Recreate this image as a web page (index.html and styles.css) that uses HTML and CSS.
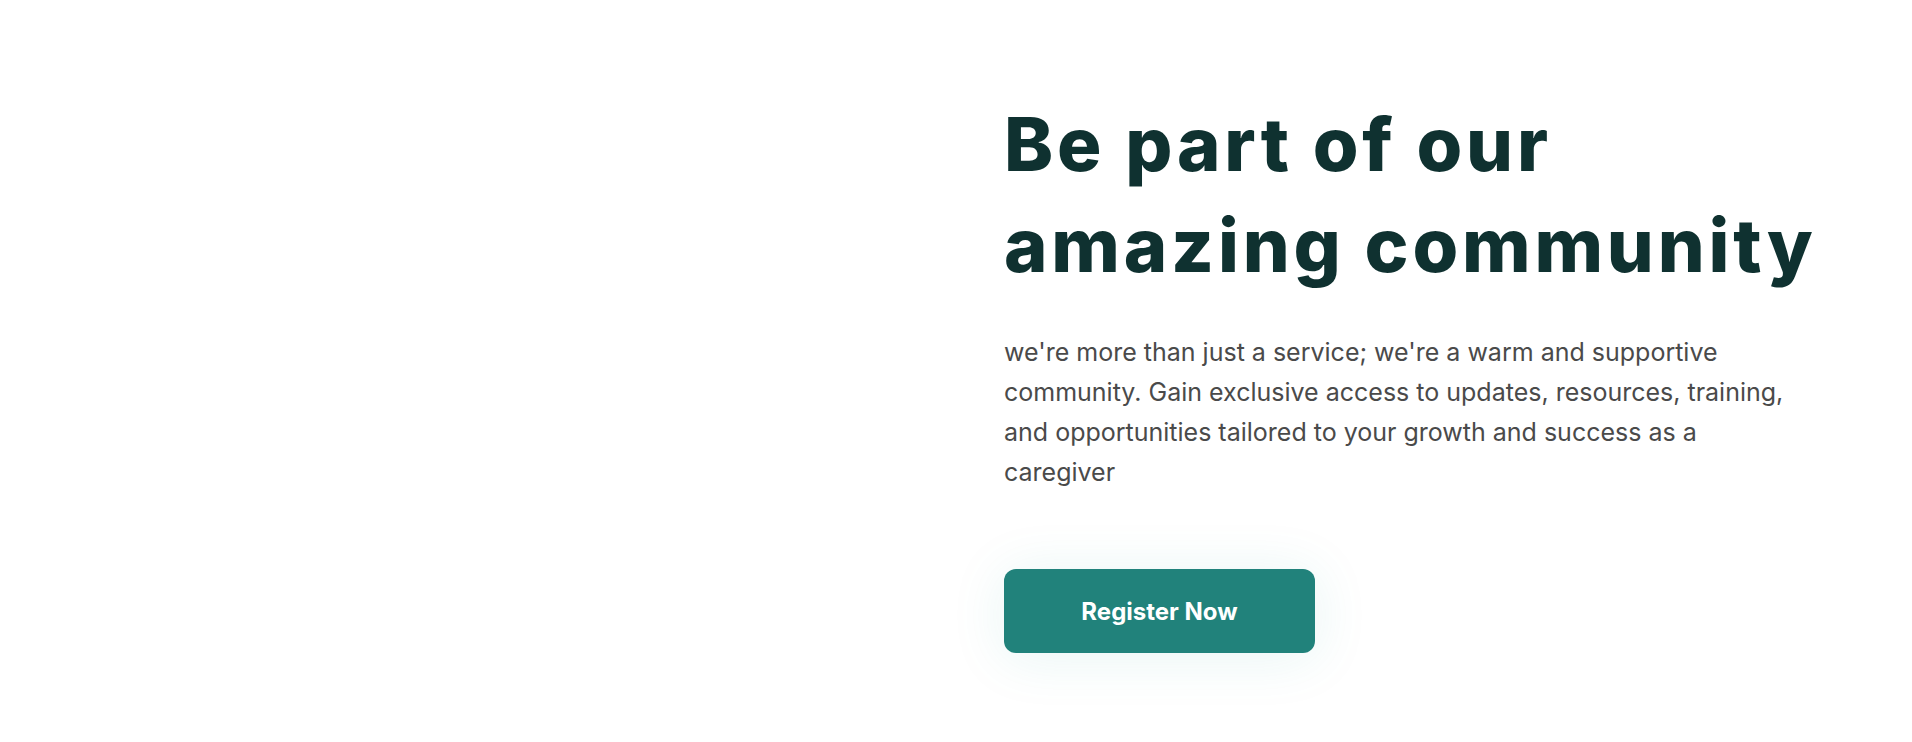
FILE: index.html
```html
<!DOCTYPE html>
<html lang="en">
<head>
<meta charset="utf-8">
<title>Community</title>
<link rel="stylesheet" href="styles.css">
</head>
<body>
<section class="community">
  <div class="media"></div>
  <div class="content">
    <h2 class="title">Be part of our<br>amazing community</h2>
    <p class="lead">we're more than just a service; we're a warm and supportive community. Gain exclusive access to updates, resources, training, and opportunities tailored to your growth and success as a caregiver</p>
    <a class="btn" href="#">Register Now</a>
  </div>
</section>
</body>
</html>
```
FILE: styles.css
```css
html, body {
  margin: 0;
  padding: 0;
  background: #ffffff;
}
.community {
  display: grid;
  grid-template-columns: 1fr 1fr;
  column-gap: 96px;
  padding: 0 60px;
  height: 742px;
  box-sizing: border-box;
}
.content {
  padding-top: 94px;
}
.title {
  margin: 0;
  font-family: Inter, "Noto Sans", sans-serif;
  font-weight: 800;
  font-size: 74px;
  line-height: 101px;
  color: #0f3130;
  letter-spacing: 3.8px;
}
.lead {
  margin: 36px 0 0;
  width: 785px;
  font-family: Inter, "Noto Sans", sans-serif;
  font-size: 25px;
  line-height: 40px;
  color: #4a4a4a;
}
.btn {
  display: inline-flex;
  align-items: center;
  justify-content: center;
  margin-top: 77px;
  width: 311px;
  height: 84px;
  border-radius: 12px;
  background: #21827b;
  color: #ffffff;
  font-family: Inter, "Noto Sans", sans-serif;
  font-weight: 700;
  font-size: 24px;
  text-decoration: none;
  box-shadow: 0 4px 56px rgba(33, 160, 150, 0.1);
}
```
